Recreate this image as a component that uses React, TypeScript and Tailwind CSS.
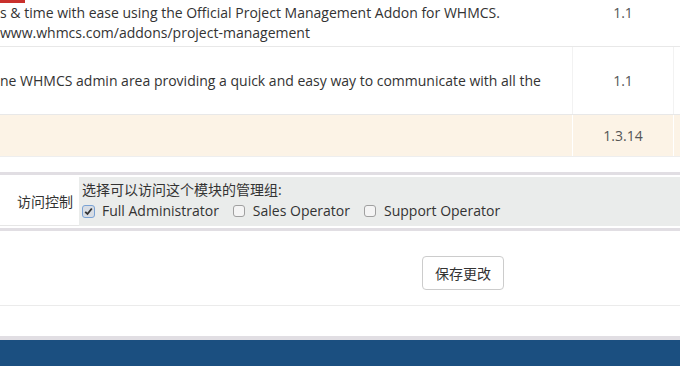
export default function App() {
  const font = { fontFamily: '"Open Sans", "Noto Sans CJK SC", sans-serif' };

  return (
    <div className="w-[680px] h-[366px] overflow-hidden bg-white text-[14px] text-[#333]" style={font}>
      {/* Addon table */}
      <div className="relative">
        <div className="absolute left-0 top-0 w-[25px] h-[3px] bg-[#c9302c]"></div>

        <div className="flex h-[47px] border-b border-[#e8e8e8]">
          <div className="w-[572px] pt-[3px] leading-[20px] whitespace-nowrap overflow-hidden">
            <div>s &amp; time with ease using the Official Project Management Addon for WHMCS.</div>
            <div>www.whmcs.com/addons/project-management</div>
          </div>
          <div className="w-[101px] border-l border-white pt-[3px] leading-[20px] text-center text-[#555]">1.1</div>
          <div className="flex-1 border-l border-white"></div>
        </div>

        <div className="flex h-[68px] border-b border-[#e8e8e8]">
          <div className="w-[572px] flex items-center whitespace-nowrap overflow-hidden">
            ne WHMCS admin area providing a quick and easy way to communicate with all the
          </div>
          <div className="w-[101px] border-l border-[#f2f2f2] flex items-center justify-center text-[#555]">1.1</div>
          <div className="flex-1 border-l border-[#f2f2f2]"></div>
        </div>

        <div className="flex h-[42px] bg-[#fcf3e6] border-b border-[#eeeeee]">
          <div className="w-[572px]"></div>
          <div className="w-[101px] border-l border-white flex items-center justify-center text-[#555]">1.3.14</div>
          <div className="flex-1 border-l border-white"></div>
        </div>
      </div>

      {/* Access control */}
      <div className="mt-[15px] border-t-[3px] border-b-[3px] border-[#e1dee3]">
        <div className="flex h-[53px] pt-[2px] pb-[2px]">
          <div className="w-[79px] flex items-center justify-end pr-[6px] border-b border-[#e6e6e6]">访问控制</div>
          <div className="flex-1 bg-[#eaeceb] pl-[3px] pt-[3px]">
            <div className="leading-[20px]">选择可以访问这个模块的管理组:</div>
            <div className="flex items-center leading-[22px]">
              <label className="flex items-center mr-[14px]">
                <span className="w-[13px] h-[13px] rounded-[3px] border border-[#7aa2d4] bg-[#d8dde4] flex items-center justify-center mr-[7px]">
                  <svg width="9" height="9" viewBox="0 0 9 9">
                    <path d="M1.2 4.8 L3.5 7 L7.8 1.5" fill="none" stroke="#333" strokeWidth="1.8" />
                  </svg>
                </span>
                Full Administrator
              </label>
              <label className="flex items-center mr-[14px]">
                <span className="w-[12px] h-[12px] rounded-[3px] border border-[#a0a0a0] bg-[#f4f4f4] mr-[8px]"></span>
                Sales Operator
              </label>
              <label className="flex items-center">
                <span className="w-[12px] h-[12px] rounded-[3px] border border-[#a0a0a0] bg-[#f4f4f4] mr-[8px]"></span>
                Support Operator
              </label>
            </div>
          </div>
        </div>
      </div>

      {/* Save */}
      <div className="h-[75px] border-b border-[#ebebeb] flex items-start pt-[25px] pl-[422px]">
        <button className="w-[82px] h-[34px] border border-[#cccccc] rounded-[4px] bg-white text-[#333]">保存更改</button>
      </div>

      <div className="h-[30px]"></div>
      <div className="h-[4px] bg-[#e1dee3]"></div>
      <div className="h-[26px] bg-[#1b4f80]"></div>
    </div>
  );
}
